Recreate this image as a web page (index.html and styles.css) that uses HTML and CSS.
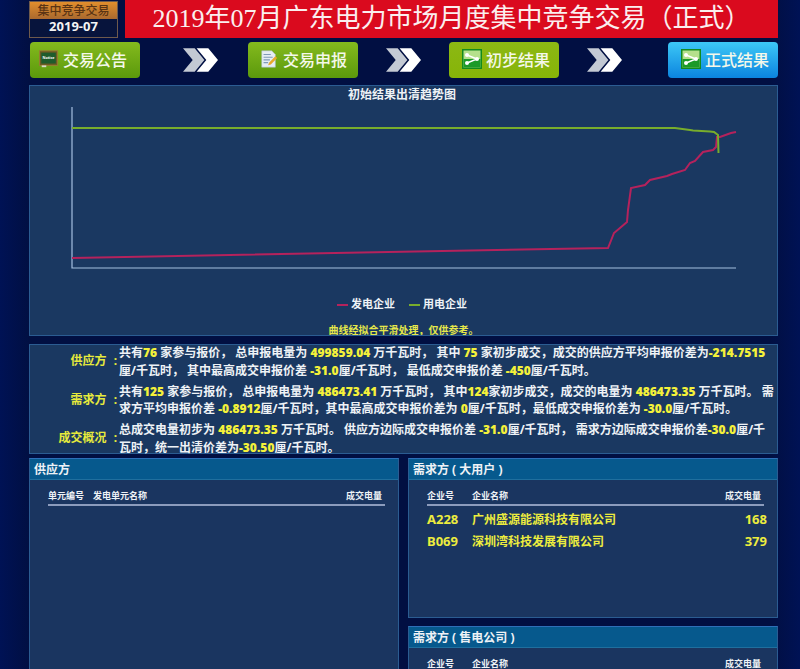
FILE: index.html
```html
<!DOCTYPE html>
<html lang="zh-CN">
<head>
    <meta charset="UTF-8">
    <meta name="viewport" content="width=device-width, initial-scale=1.0">
    <title>2019年07月广东电力市场月度集中竞争交易</title>
    <link rel="stylesheet" href="styles.css">
</head>
<body>

<div class="page">
    <div class="header">
        <div class="logo">
            <div class="logo-top">集中竞争交易</div>
            <div class="logo-date">2019-07</div>
        </div>
        <h1>2019年07月广东电力市场月度集中竞争交易（正式）</h1>
    </div>

    <div class="nav">
        <a class="step green step-first">
            <svg class="step-icon" viewBox="0 0 22 20">
                <rect x="0.5" y="1" width="20" height="16" fill="#6b5a22" stroke="#9a7d34"/>
                <rect x="2.500" y="3" width="16" height="12" fill="#1f5c2c"/>
                <text x="10.500" y="10.500" class="notice-text">Notice</text>
                <rect x="3" y="17" width="5" height="2" fill="#d8d8c8"/>
            </svg>
            <span>交易公告</span>
        </a>
        <svg class="arrow arrow-first" viewBox="0 0 36 24">
            <path d="M0 0h12l10 12-10 12H0l10-12z" fill="#c3c9d3"/>
            <path d="M14 0h12l10 12-10 12H14l10-12z" fill="#fff"/>
        </svg>
        <a class="step green">
            <svg class="step-icon" viewBox="0 0 22 20">
                <path d="M3 1h11l4 4v14H3z" fill="#e6edf4" stroke="#aab8c6" stroke-width="0.6"/>
                <path d="M5 5h8M5 8h10M5 11h7M5 14h5" stroke="#7f9ab8" stroke-width="1.2"/>
                <path d="M10 17l1-3 7-7 2 2-7 7z" fill="#e8a92c"/>
            </svg>
            <span>交易申报</span>
        </a>
        <svg class="arrow" viewBox="0 0 36 24">
            <path d="M0 0h12l10 12-10 12H0l10-12z" fill="#c3c9d3"/>
            <path d="M14 0h12l10 12-10 12H14l10-12z" fill="#fff"/>
        </svg>
        <a class="step lime">
            <svg class="step-icon" viewBox="0 0 20 20">
                <rect width="20" height="20" fill="#128a1e"/>
                <rect x="1.500" y="1.500" width="17" height="17" fill="#b5e08c"/>
                <rect x="1.500" y="10" width="17" height="8.500" fill="#1c9a28"/>
                <path d="M5 6l10 4-10 4" fill="none" stroke="#fff" stroke-width="1.400"/>
                <circle cx="5" cy="6" r="2" fill="#fff"/>
                <circle cx="15" cy="10" r="2" fill="#fff"/>
                <circle cx="5" cy="14" r="2" fill="#fff"/>
            </svg>
            <span>初步结果</span>
        </a>
        <svg class="arrow arrow-last" viewBox="0 0 36 24">
            <path d="M0 0h12l10 12-10 12H0l10-12z" fill="#c3c9d3"/>
            <path d="M14 0h12l10 12-10 12H14l10-12z" fill="#fff"/>
        </svg>
        <a class="step blue">
            <svg class="step-icon" viewBox="0 0 20 20">
                <rect width="20" height="20" fill="#128a1e"/>
                <rect x="1.500" y="1.500" width="17" height="17" fill="#b5e08c"/>
                <rect x="1.500" y="10" width="17" height="8.500" fill="#1c9a28"/>
                <path d="M5 6l10 4-10 4" fill="none" stroke="#fff" stroke-width="1.400"/>
                <circle cx="5" cy="6" r="2" fill="#fff"/>
                <circle cx="15" cy="10" r="2" fill="#fff"/>
                <circle cx="5" cy="14" r="2" fill="#fff"/>
            </svg>
            <span>正式结果</span>
        </a>
    </div>

    <div class="box chart-box">
        <div class="chart-title">初始结果出清趋势图</div>
        <svg class="chart" viewBox="0 0 748 172">
            <path d="M43 5V166H707" fill="none" stroke="#a4bfe0" stroke-width="1.200"/>
            <path d="M43 156L579 146L585 131L598 120L599 108L602 86L616 83L621 78L638 74L643 72L656 68L661 61L666 59L674 50L684 48L687 45L688 35L691 35L702 31L707 30" fill="none" stroke="#b5225c" stroke-width="2"/>
            <path d="M43 26H646L661 28L664 28.500L681 29.500L685 30L689 33L689.500 51" fill="none" stroke="#78ad2c" stroke-width="2"/>
        </svg>
        <div class="legend">
            <span><i class="key key-red"></i>发电企业</span>
            <span><i class="key key-green"></i>用电企业</span>
        </div>
        <div class="chart-note">曲线经拟合平滑处理，仅供参考。</div>
    </div>

    <div class="box info-box">
        <div class="info-row">
            <div class="info-label">供应方<span class="colon">:</span></div>
            <div class="info-text">共有<b>76</b> 家参与报价， 总申报电量为 <b>499859.04</b> 万千瓦时， 其中 <b>75</b> 家初步成交，成交的供应方平均申报价差为<b>-214.7515</b> 厘/千瓦时， 其中最高成交申报价差 <b>-31.0</b>厘/千瓦时， 最低成交申报价差 <b>-450</b>厘/千瓦时。</div>
        </div>
        <div class="info-row">
            <div class="info-label">需求方<span class="colon">:</span></div>
            <div class="info-text">共有<b>125</b> 家参与报价， 总申报电量为 <b>486473.41</b> 万千瓦时， 其中<b>124</b>家初步成交，成交的电量为 <b>486473.35</b> 万千瓦时。 需求方平均申报价差 <b>-0.8912</b>厘/千瓦时，其中最高成交申报价差为 <b>0</b>厘/千瓦时，最低成交申报价差为 <b>-30.0</b>厘/千瓦时。</div>
        </div>
        <div class="info-row">
            <div class="info-label">成交概况<span class="colon">:</span></div>
            <div class="info-text">总成交电量初步为 <b>486473.35</b> 万千瓦时。 供应方边际成交申报价差 <b>-31.0</b>厘/千瓦时， 需求方边际成交申报价差<b>-30.0</b>厘/千瓦时，统一出清价差为<b>-30.50</b>厘/千瓦时。</div>
        </div>
    </div>

    <div class="columns">
        <div class="panel panel-tall">
            <div class="panel-head">供应方</div>
            <table class="list">
                <tr><th class="col-code">单元编号</th><th>发电单元名称</th><th class="num">成交电量</th><th class="spacer"></th></tr>
            </table>
        </div>
        <div class="side">
            <div class="panel">
                <div class="panel-head">需求方 ( 大用户 )</div>
                <table class="list">
                    <tr><th class="col-code">企业号</th><th>企业名称</th><th class="num">成交电量</th><th class="spacer"></th></tr>
                    <tr><td class="code">A228</td><td>广州盛源能源科技有限公司</td><td class="num" colspan="2">168</td></tr>
                    <tr><td class="code">B069</td><td>深圳湾科技发展有限公司</td><td class="num" colspan="2">379</td></tr>
                </table>
            </div>
            <div class="panel">
                <div class="panel-head">需求方 ( 售电公司 )</div>
                <table class="list">
                    <tr><th class="col-code">企业号</th><th>企业名称</th><th class="num">成交电量</th><th class="spacer"></th></tr>
                </table>
            </div>
        </div>
    </div>
</div>

</body>
</html>
```

FILE: styles.css
```css
html, body {
    height: 669px;
    overflow: hidden;
}
body {
    margin: 0;
    font-family: "Noto Sans", "Noto Sans CJK SC", sans-serif;
    background: linear-gradient(to right, #001255 0, #010f42 30px, #010f42 770px, #001255 800px);
    color: #eef2f6;
}
.page {
    width: 749px;
    margin-left: 29px;
    padding-top: 1px;
}
.header {
    display: flex;
    gap: 7px;
    height: 37px;
}
.logo {
    width: 89px;
    box-sizing: border-box;
    border: 1px solid #6e5a4c;
    font-weight: bold;
    text-align: center;
}
.logo-top {
    height: 17px;
    line-height: 17px;
    font-size: 12px;
    font-weight: 500;
    color: #5a3414;
    background: linear-gradient(#e28e2c, #a9692f);
}
.logo-date {
    height: 18px;
    line-height: 15px;
    font-size: 13px;
    color: #f4f4f4;
    background: #07143c;
}
h1 {
    flex: 1;
    margin: -1px 0 0;
    height: 38px;
    line-height: 38px;
    font-family: "Liberation Serif", "Noto Sans CJK SC", serif;
    font-size: 26px;
    font-weight: normal;
    text-align: center;
    color: #fbeeee;
    background: #da0a1e;
}
.nav {
    display: flex;
    align-items: center;
    margin: 4px 0 0 1px;
    height: 36px;
}
.step {
    display: flex;
    align-items: center;
    justify-content: center;
    gap: 4px;
    box-sizing: border-box;
    width: 110px;
    height: 36px;
    padding-bottom: 2px;
    border-radius: 4px;
    font-size: 16px;
    font-weight: 500;
    color: #f4f8ea;
}
.step-first {
    padding-right: 4px;
}
.green {
    background: linear-gradient(#84ba1e, #5b990c);
}
.lime {
    padding-left: 4px;
    background: linear-gradient(#8cb814, #86b408);
}
.blue {
    padding-left: 4px;
    background: linear-gradient(#3dc8f6, #0b84df);
}
.step-icon {
    width: 20px;
    height: 20px;
    flex: none;
}
.notice-text {
    font-size: 4px;
    font-weight: bold;
    fill: #fff;
    text-anchor: middle;
}
.arrow {
    width: 35px;
    height: 24px;
    margin: 0 28px;
    flex: none;
}
.arrow-first {
    margin: 0 30px 0 43px;
}
.arrow-last {
    margin: 0 46px 0 28px;
}
.box {
    box-sizing: border-box;
    background: #1a3861;
    border: 1px solid #2b5c92;
}
.chart-box {
    height: 251px;
    margin-top: 7px;
    overflow: hidden;
}
.chart-title {
    height: 16px;
    padding-right: 3px;
    line-height: 17px;
    font-size: 12px;
    font-weight: bold;
    text-align: center;
}
.chart {
    display: block;
    width: 748px;
    height: 172px;
    margin-left: -1px;
}
.legend {
    display: flex;
    justify-content: center;
    gap: 14px;
    margin-top: 23px;
    padding-right: 3px;
    font-size: 11px;
    font-weight: bold;
    line-height: 14px;
}
.key {
    display: inline-block;
    width: 11px;
    height: 2px;
    margin-right: 3px;
    vertical-align: middle;
}
.key-red {
    background: #b5225c;
}
.key-green {
    background: #78ad2c;
}
.chart-note {
    margin-top: 13px;
    font-size: 10px;
    font-weight: bold;
    line-height: 12px;
    text-align: center;
    color: #e6e84a;
}
.info-box {
    height: 110px;
    margin-top: 8px;
}
.info-row {
    display: flex;
    height: 38.500px;
    font-size: 12px;
    line-height: 17.500px;
    font-weight: bold;
}
.info-row:first-child {
    margin-top: -1px;
}
.info-label {
    width: 87px;
    padding: 8px 2px 0 0;
    text-align: right;
    color: #e6ea3c;
    flex: none;
    white-space: nowrap;
}
.colon {
    margin-left: 7px;
}
.info-text {
    width: 656px;
}
.info-text b {
    color: #f4f13a;
}
.columns {
    display: flex;
    gap: 9px;
    margin-top: 4px;
}
.panel {
    box-sizing: border-box;
    width: 370px;
    height: 160px;
    background: #1a3560;
    border: 1px solid #2b5c92;
    border-top-color: #2e6fb8;
}
.panel-tall {
    height: 300px;
}
.side {
    display: flex;
    flex-direction: column;
    gap: 8px;
}
.panel-head {
    height: 20px;
    padding-left: 4px;
    line-height: 21px;
    font-size: 12px;
    font-weight: bold;
    background: #06598d;
    border-bottom: 1px solid #1f6f9e;
}
.list {
    width: 340px;
    margin: 6px 0 0 18px;
    border-collapse: collapse;
}
.list th {
    height: 18px;
    padding: 0;
    font-size: 9px;
    font-weight: bold;
    text-align: left;
    border-bottom: 2px solid #8c9cbd;
}
.list .spacer {
    width: 3px;
    border-bottom: 0;
}
.list td {
    height: 22px;
    padding: 0;
    font-size: 12px;
    font-weight: bold;
    color: #ecec3e;
}
.list tr:nth-child(2) td {
    padding-top: 2px;
}
.list td.code, .list td.num {
    font-size: 13px;
}
.col-code {
    width: 45px;
}
.list .num {
    text-align: right;
}
.list th.num {
    padding-right: 3px;
}
```
